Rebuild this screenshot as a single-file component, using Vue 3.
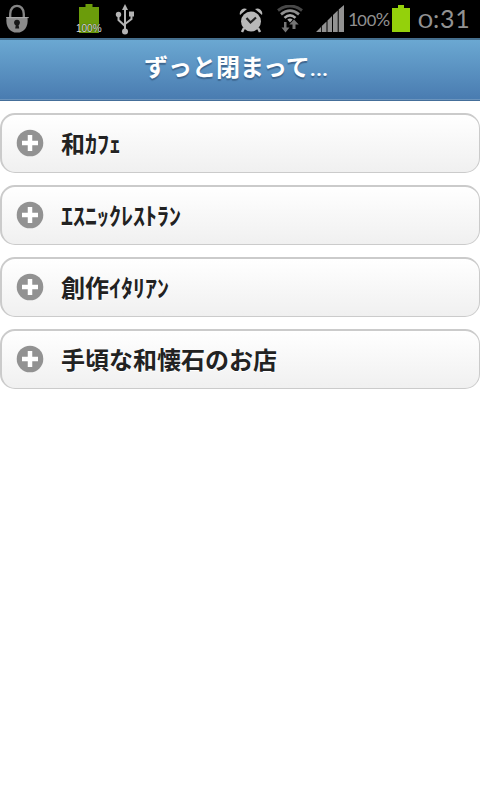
<template>
  <div class="screen">
    <div class="status">
      <svg class="lock" width="26" height="32" viewBox="0 0 26 32">
        <path d="M5.500 15V11C5.500 -1 20.500 -1 20.500 11V15" fill="none" stroke="#858585" stroke-width="2.600" />
        <path d="M1.500 14.500H24.500C26 25 21 31.500 13 31.500S0 25 1.500 14.500Z" fill="#8b8b8b" />
        <path d="M1 15H26" stroke="#b5b5b5" stroke-width="1" />
        <circle cx="13" cy="20.500" r="3.200" fill="#181818" />
        <path d="M12 21H14.200L15.500 27H11Z" fill="#181818" />
      </svg>
      <div class="battery-left">
        <svg width="20" height="29" viewBox="0 0 20 29">
          <path d="M6.500 0H13.500V3H20V29H0V3H6.500Z" fill="#6b9c0b" />
        </svg>
        <span>100%</span>
      </div>
      <svg class="usb" width="20" height="31" viewBox="0 0 20 31" fill="none" stroke="#b4b4b4" stroke-width="2">
        <path d="M10 4V27M3.500 12V16L10 22M16.500 11V15L10 20" />
        <path d="M10 0L13 6H7Z" fill="#b4b4b4" stroke="none" />
        <circle cx="3.500" cy="10.500" r="2.700" fill="#b4b4b4" stroke="none" />
        <rect x="14" y="7.500" width="5" height="5" fill="#b4b4b4" stroke="none" />
        <circle cx="10" cy="27.500" r="3" fill="#b4b4b4" stroke="none" />
      </svg>
      <svg class="alarm" width="24" height="25" viewBox="0 0 24 25">
        <path d="M5 20L3 24M19 20L21 24" stroke="#b8b8b8" stroke-width="2.500" />
        <path d="M1 7A5 5 0 0 1 8 1ZM23 7A5 5 0 0 0 16 1Z" fill="#b8b8b8" />
        <circle cx="12" cy="13.500" r="10" fill="#b8b8b8" />
        <path d="M7.500 10L11.500 14.500L17 9.500" fill="none" stroke="#222" stroke-width="2.200" />
      </svg>
      <svg class="wifi" width="26" height="28" viewBox="0 0 26 28" fill="none">
        <path d="M1 5.500Q13 -3.500 25 5.500" stroke="#484848" stroke-width="3" />
        <path d="M4 9.300Q13 2 22 9.300" stroke="#8e8e8e" stroke-width="2.800" />
        <path d="M7.500 12.900Q13 8 18.500 12.900" stroke="#a8a8a8" stroke-width="2.600" />
        <path d="M10.300 14.500Q13 12.500 15.700 14.500L13 17.500Z" fill="#a8a8a8" />
        <path d="M7 17H9.500V22.500H12.500L8.500 27.500L4.500 22.500H7ZM15.500 24V19.500H12.300L17 14.500L21.700 19.500H18.500V24Z" fill="#757575" />
      </svg>
      <svg class="signal" width="28" height="28" viewBox="0 0 28 28" fill="#929292">
        <path d="M0 27L5 22V27ZM5.800 21L10.500 16.500V27H5.800ZM11.500 15.500L16 11V27H11.500ZM17 10L21.700 5.500V27H17ZM22.700 4.500L28 0V27H22.700Z" />
      </svg>
      <span class="percent">1<small>00</small>%</span>
      <svg class="battery" width="18" height="27" viewBox="0 0 18 27">
        <path d="M6 0H12V3H18V27H0V3H6Z" fill="#94d10b" />
      </svg>
      <span class="clock"><small>0</small>:31</span>
    </div>

    <header class="header">
      <h1>ずっと閉まって<span>...</span></h1>
    </header>

    <ul class="list">
      <li v-for="item in items" :key="item" class="item">
        <svg width="28" height="28" viewBox="0 0 28 28">
          <circle cx="14" cy="14" r="13.300" fill="#929292" />
          <path d="M14 6V22M6 14H22" stroke="#fff" stroke-width="4.500" />
        </svg>
        <span>{{ item }}</span>
      </li>
    </ul>
  </div>
</template>

<script setup>
import { ref } from 'vue'

const items = ref(['和ｶﾌｪ', 'ｴｽﾆｯｸﾚｽﾄﾗﾝ', '創作ｲﾀﾘｱﾝ', '手頃な和懐石のお店'])
</script>

<style>
body {
  background: #fff;
}
</style>

<style scoped>
.screen {
  height: 800px;
  overflow: hidden;
  background: #fff;
  font-family: "Noto Sans CJK JP", sans-serif;
}

.status {
  display: flex;
  align-items: flex-start;
  height: 38px;
  background: #000;
}
.status svg {
  display: block;
  flex: none;
}
.lock {
  width: 24px;
  height: 29px;
  margin: 4px 0 0 5px;
}
.battery-left {
  position: relative;
  width: 26px;
  margin: 4px 0 0 47px;
}
.battery-left svg {
  margin-left: 3px;
}
.battery-left span {
  position: absolute;
  left: 0;
  top: 20px;
  font: 10px/10px "Liberation Sans", sans-serif;
  color: #ddd;
  text-shadow: 0 0 1px #000;
}
.usb {
  margin: 4px 0 0 13px;
}
.alarm {
  margin: 8px 0 0 104px;
}
.wifi {
  margin: 5px 0 0 14px;
}
.signal {
  margin: 5px 0 0 13px;
}
.percent {
  width: 44px;
  margin-left: 4px;
  font: 400 18px/39px Lato, sans-serif;
  color: #909090;
  white-space: nowrap;
}
.percent small {
  display: inline-block;
  font-size: 15px;
  line-height: 20px;
  transform: scaleX(1.1);
}
.battery {
  margin: 5px 0 0 0;
}
.clock {
  margin-left: 8px;
  font: 400 25px/37px Lato, sans-serif;
  letter-spacing: 0.7px;
  color: #929292;
  white-space: nowrap;
}
/* old-style zero: low and round */
.clock small {
  display: inline-block;
  font-size: 19px;
  line-height: 20px;
  letter-spacing: 0;
  margin: 0 2px;
  transform: scaleX(1.35);
}

.header {
  box-sizing: border-box;
  height: 63px;
  border-top: 2px solid #456f8e;
  border-bottom: 1px solid #456f9a;
  background: linear-gradient(#6ba8d2, #497bb0);
  box-shadow: inset 0 -1px #6b94bd;
}
.header h1 {
  margin: 0;
  padding-left: 144px;
  font-size: 24px;
  line-height: 52px;
  font-weight: bold;
  color: #fff;
  text-shadow: 0 2px 1px #3e6790;
  white-space: nowrap;
}
.header span {
  font-family: Roboto, sans-serif;
  font-size: 21px;
}

.list {
  margin: 0;
  padding: 12px 0 0;
  list-style: none;
}
.item {
  display: flex;
  align-items: center;
  box-sizing: border-box;
  height: 60px;
  margin-bottom: 12px;
  padding: 0 0 2px 14px;
  border: 2px solid #cbcbcb;
  border-width: 2px 1px 1px 2px;
  border-radius: 15px;
  background: linear-gradient(#fff, #f0f0f0);
}
.item span {
  margin-left: 17px;
  font-size: 24px;
  line-height: 36px;
  font-weight: bold;
  color: #222;
  text-shadow: 0 1px #fff;
}
</style>
